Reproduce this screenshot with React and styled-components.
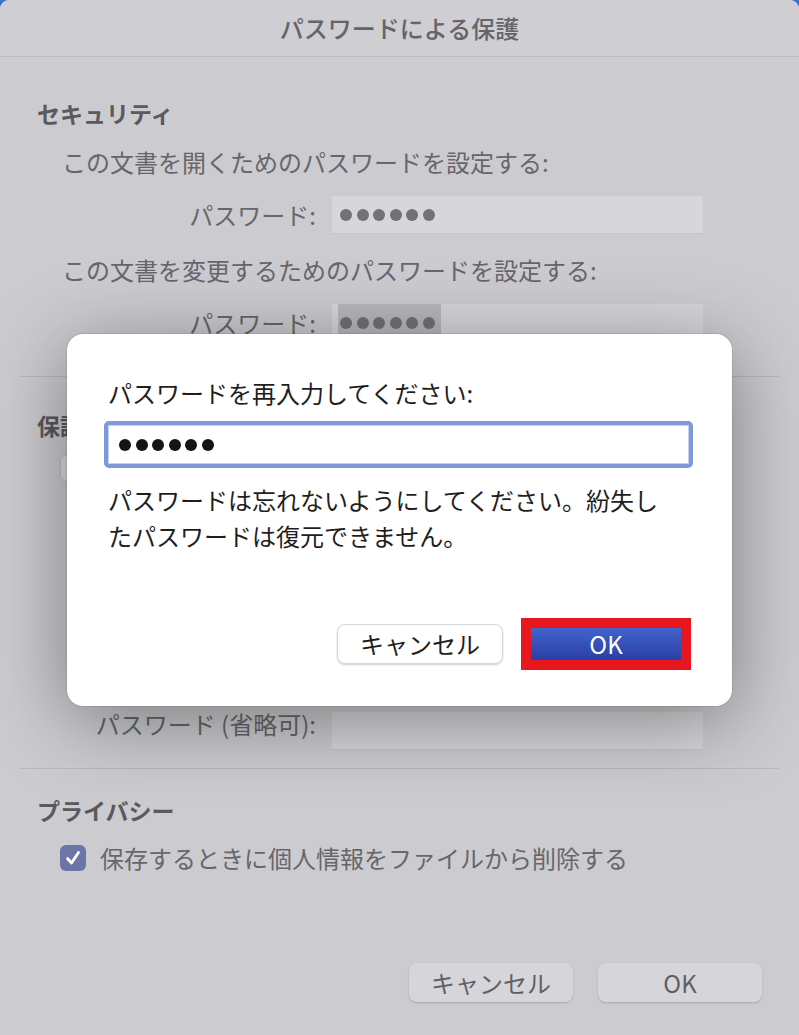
import React from 'react'
import styled, { createGlobalStyle } from 'styled-components'

const GlobalStyle = createGlobalStyle`
  html, body {
    margin: 0;
    padding: 0;
    background: #3f6fd3;
  }
  body {
    font-family: "Noto Sans CJK JP", "Noto Sans", sans-serif;
  }
`

const Sheet = styled.div`
  position: relative;
  width: 799px;
  height: 1035px;
  background: #cccbcf;
  border-radius: 9px 9px 0 0;
  overflow: hidden;
  display: flex;
  flex-direction: column;
  color: #67666b;
  font-size: 24px;
  line-height: 36px;
`

const TitleBar = styled.div`
  height: 56px;
  flex: none;
  display: flex;
  align-items: center;
  justify-content: center;
  background: #cfced2;
  border-bottom: 1px solid #bdbcc0;
  color: #656469;
  font-weight: 500;
`

const SectionTitle = styled.div`
  margin-top: ${p => p.$top}px;
  padding-left: 37px;
  font-weight: 700;
  font-size: 23px;
  color: #5a595e;
`

const Line = styled.div`
  margin-top: ${p => p.$top}px;
  padding-left: 62px;
`

const FieldRow = styled.div`
  margin-top: ${p => p.$top}px;
  display: grid;
  grid-template-columns: 316px 371px;
  column-gap: 16px;
  align-items: ${p => (p.$split ? 'stretch' : 'center')};
  height: ${p => p.$height || 38}px;
`

const FieldLabel = styled.div`
  text-align: right;
  align-self: ${p => (p.$top ? 'start' : 'auto')};
`

const Field = styled.div`
  height: 38px;
  box-sizing: border-box;
  background: #d7d6da;
  border-bottom: 1px solid #c4c3c7;
  display: flex;
  align-items: center;
  padding-left: 6px;
  align-self: ${p => (p.$bottom ? 'end' : 'auto')};
`

const Selection = styled.div`
  display: flex;
  align-items: center;
  height: 100%;
  padding: 0 6px 0 2px;
  background: ${p => (p.$on ? '#b8b7bb' : 'transparent')};
`

const DotRow = styled.div`
  display: flex;
  gap: ${p => p.$gap}px;
`

const Dot = styled.span`
  width: ${p => p.$size}px;
  height: ${p => p.$size}px;
  border-radius: 50%;
  background: ${p => p.$color};
`

const Divider = styled.div`
  margin: ${p => p.$top}px 20px 0;
  height: 1px;
  background: #bab9bd;
`

const CheckRow = styled.div`
  margin-top: ${p => p.$top}px;
  padding-left: 60px;
  display: flex;
  align-items: center;
  gap: 14px;
`

const Box = styled.span`
  width: 26px;
  height: 26px;
  border-radius: 6px;
  box-sizing: border-box;
  display: flex;
  align-items: center;
  justify-content: center;
  background: ${p => (p.$checked ? '#6b75a8' : '#dddce0')};
  border: ${p => (p.$checked ? 'none' : '1px solid #bebdc1')};
`

const Footer = styled.div`
  margin-top: ${p => p.$top}px;
  display: flex;
  justify-content: flex-end;
  gap: 25px;
  padding-right: 37px;
`

const SheetButton = styled.div`
  width: 164px;
  height: 39px;
  border-radius: 8px;
  background: #d6d5d9;
  box-shadow: 0 1px 2px rgba(0, 0, 0, 0.18);
  display: flex;
  align-items: center;
  justify-content: center;
  color: #615f65;
`

const Modal = styled.div`
  position: absolute;
  top: 334px;
  left: 67px;
  width: 665px;
  height: 372px;
  box-sizing: border-box;
  padding: 41px 41px 36px;
  background: #fff;
  border-radius: 16px;
  box-shadow: 0 0 0 1px rgba(0, 0, 0, 0.08), 0 14px 80px rgba(0, 0, 0, 0.4);
  display: flex;
  flex-direction: column;
  color: #1e1e1e;
`

const PasswordInput = styled.div`
  margin: 10px 0 0 -4px;
  width: 589px;
  height: 47px;
  box-sizing: border-box;
  border: 4px solid #7f98d8;
  border-radius: 5px;
  box-shadow: inset 0 0 0 1px #c7d2ee;
  display: flex;
  align-items: center;
  padding-left: 11px;
`

const Message = styled.div`
  margin-top: 14px;
  max-width: 560px;
`

const ModalButtons = styled.div`
  margin-top: auto;
  display: flex;
  justify-content: flex-end;
  align-items: center;
  gap: 18px;
`

const CancelButton = styled.div`
  width: 166px;
  height: 40px;
  box-sizing: border-box;
  border: 1px solid #d6d6d6;
  border-radius: 8px;
  box-shadow: 0 1px 2px rgba(0, 0, 0, 0.2);
  display: flex;
  align-items: center;
  justify-content: center;
`

const Highlight = styled.div`
  padding: 10px;
  background: #e8161f;
`

const PrimaryButton = styled.div`
  width: 150px;
  height: 32px;
  background: linear-gradient(#4263cc, #2a3fa6);
  color: #fff;
  display: flex;
  align-items: center;
  justify-content: center;
`

function Dots({ size, gap, color }) {
  return (
    <DotRow $gap={gap}>
      {[0, 1, 2, 3, 4, 5].map(i => (
        <Dot key={i} $size={size} $color={color} />
      ))}
    </DotRow>
  )
}

function Checkbox({ checked }) {
  return (
    <Box $checked={checked}>
      {checked && (
        <svg width="18" height="18" viewBox="0 0 18 18">
          <path d="M3.5 9.5 L7.5 14 L14.5 3.5" fill="none" stroke="#fff" strokeWidth="2.8" strokeLinecap="round" strokeLinejoin="round" />
        </svg>
      )}
    </Box>
  )
}

export default function App() {
  return (
    <>
      <GlobalStyle />
      <Sheet>
        <TitleBar>パスワードによる保護</TitleBar>

        <SectionTitle $top={38}>セキュリティ</SectionTitle>
        <Line $top={13}>この文書を開くためのパスワードを設定する:</Line>
        <FieldRow $top={16}>
          <FieldLabel>パスワード:</FieldLabel>
          <Field>
            <Selection>
              <Dots size={12} gap={4.5} color="#727176" />
            </Selection>
          </Field>
        </FieldRow>
        <Line $top={18}>この文書を変更するためのパスワードを設定する:</Line>
        <FieldRow $top={16}>
          <FieldLabel>パスワード:</FieldLabel>
          <Field>
            <Selection $on>
              <Dots size={12} gap={4.5} color="#727176" />
            </Selection>
          </Field>
        </FieldRow>

        <Divider $top={34} />
        <SectionTitle $top={30}>保護</SectionTitle>
        <CheckRow $top={7}>
          <Checkbox />
          <span>変更履歴の記録を保護する</span>
        </CheckRow>
        <FieldRow $top={220} $height={44} $split>
          <FieldLabel $top>パスワード (省略可):</FieldLabel>
          <Field $bottom />
        </FieldRow>

        <Divider $top={18} />
        <SectionTitle $top={23}>プライバシー</SectionTitle>
        <CheckRow $top={12}>
          <Checkbox checked />
          <span>保存するときに個人情報をファイルから削除する</span>
        </CheckRow>

        <Footer $top={87}>
          <SheetButton>キャンセル</SheetButton>
          <SheetButton>OK</SheetButton>
        </Footer>

        <Modal>
          <div>パスワードを再入力してください:</div>
          <PasswordInput>
            <Dots size={12} gap={4.5} color="#141414" />
          </PasswordInput>
          <Message>
            パスワードは忘れないようにしてください。紛失したパスワードは復元できません。
          </Message>
          <ModalButtons>
            <CancelButton>キャンセル</CancelButton>
            <Highlight>
              <PrimaryButton>OK</PrimaryButton>
            </Highlight>
          </ModalButtons>
        </Modal>
      </Sheet>
    </>
  )
}
